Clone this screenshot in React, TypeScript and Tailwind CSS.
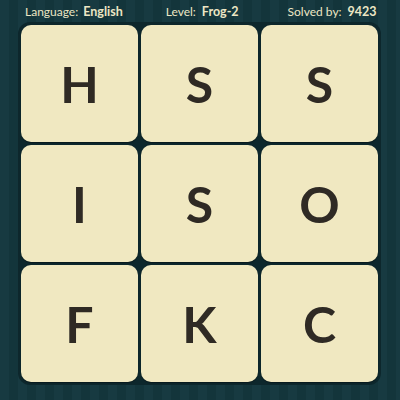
const letters = ['H', 'S', 'S', 'I', 'S', 'O', 'F', 'K', 'C'];

export default function App() {
  return (
    <div
      className="w-[400px] h-[400px] overflow-hidden bg-[repeating-linear-gradient(90deg,#173a41_0px,#173a41_9px,#13353b_9px,#13353b_18px)] text-[#ece6c4]"
      style={{ fontFamily: 'Lato, "Open Sans", sans-serif' }}
    >
      {/* Header */}
      <div className="h-[22px] flex items-center leading-none pt-[2px]">
        <div className="w-[25px]" />
        <span className="text-[12px]">Language:</span>
        <span className="text-[12.5px] font-bold ml-[5px]">English</span>
        <span className="text-[12px] ml-[43px]">Level:</span>
        <span className="text-[12.5px] font-bold ml-[6px]">Frog-2</span>
        <span className="text-[12px] ml-[49px]">Solved by:</span>
        <span className="text-[12.5px] font-bold ml-[6px]">9423</span>
      </div>

      {/* Board */}
      <div className="ml-[18px] w-[363px] grid grid-cols-3 gap-[3px] p-[3px] bg-[#0d272c] rounded-[12px]">
        {letters.map((l, i) => (
          <div
            key={i}
            className="h-[117px] rounded-[10px] bg-[#f0e8c1] shadow-[0_1px_1px_rgba(0,0,0,0.35)] flex items-center justify-center text-[#2f2a24] text-[50px] font-bold leading-none"
          >
            {l}
          </div>
        ))}
      </div>
    </div>
  );
}
